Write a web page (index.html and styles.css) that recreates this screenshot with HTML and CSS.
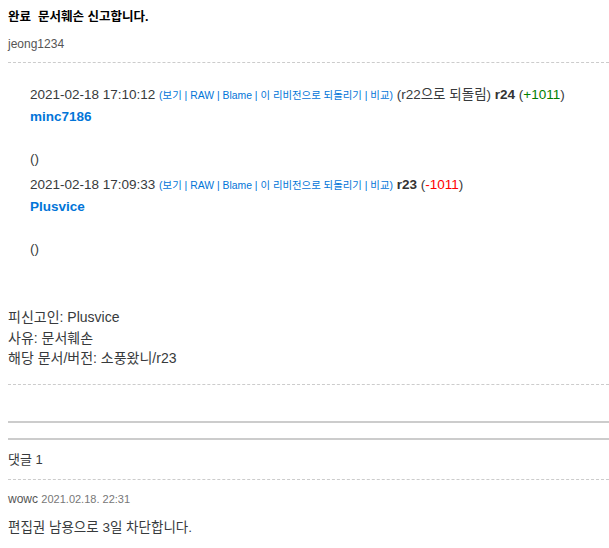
FILE: index.html
```html
<!DOCTYPE html>
<html lang="ko">
<head>
<meta charset="utf-8">
<link rel="stylesheet" href="styles.css">
</head>
<body>
<div class="page">
  <div class="title">완료 &nbsp;문서훼손 신고합니다.</div>
  <div class="author">jeong1234</div>
  <hr class="dash">
  <div class="content">
    <ul class="history">
      <li>
        <div class="rev-line">2021-02-18 17:10:12 <span class="tools">(<a>보기</a> | <a>RAW</a> | <a>Blame</a> | <a>이 리비전으로 되돌리기</a> | <a>비교</a>)</span> <span class="note">(r22으로 되돌림)</span> <b>r24</b> (<span class="plus">+1011</span>)</div>
        <div class="user">minc7186</div>
        <div class="blank"></div>
        <div class="msg">()</div>
      </li>
      <li>
        <div class="rev-line">2021-02-18 17:09:33 <span class="tools">(<a>보기</a> | <a>RAW</a> | <a>Blame</a> | <a>이 리비전으로 되돌리기</a> | <a>비교</a>)</span> <b>r23</b> (<span class="minus">-1011</span>)</div>
        <div class="user">Plusvice</div>
        <div class="blank"></div>
        <div class="msg">()</div>
      </li>
    </ul>
    <div class="report">
      <div>피신고인: Plusvice</div>
      <div>사유: 문서훼손</div>
      <div>해당 문서/버전: 소풍왔니/r23</div>
    </div>
  </div>
  <hr class="dash">
  <div class="spacer"></div>
  <hr class="thick">
  <hr class="thick">
  <div class="comments-head">댓글 1</div>
  <hr class="dash">
  <div class="comment-meta"><span class="c-user">wowc</span> <span class="c-date">2021.02.18. 22:31</span></div>
  <div class="comment-body">편집권 남용으로 3일 차단합니다.</div>
</div>
</body>
</html>
```

FILE: styles.css
```css
html, body {
  margin: 0;
  padding: 0;
  background: #fff;
}
body {
  padding: 0 0 0 8px;
  font-family: "Liberation Sans", "Noto Sans CJK KR", sans-serif;
  color: #373a3c;
  overflow: hidden;
}
.page {
  padding-top: 8px;
}
.title {
  font-size: 12.5px;
  font-weight: bold;
  color: #000;
  line-height: 18px;
}
.author {
  font-size: 12px;
  color: #555;
  line-height: 16px;
  margin-top: 10px;
}
.dash {
  border: 0;
  border-top: 1px dashed #ccc;
  margin: 0;
  height: 0;
}
.author + .dash {
  margin-top: 10px;
}
.content {
  font-size: 13.5px;
  line-height: 20.5px;
}
.history {
  list-style: none;
  margin: 21px 0 0 0;
  padding: 0 0 0 22px;
}
.history li {
  margin: 0;
}
.rev-line {
  line-height: 22px;
}
.tools {
  font-size: 10.4px;
  color: #0275d8;
}
.tools a {
  color: #0275d8;
}
.note {
  color: #373a3c;
}
.rev-line b {
  color: #333;
}
.plus { color: #008000; }
.minus { color: #ff0000; }
.user {
  font-weight: bold;
  color: #0275d8;
  line-height: 20px;
}
.blank {
  height: 21px;
}
.msg {
  line-height: 21px;
  margin-top: 0;
  margin-bottom: 5px;
}
.report {
  font-size: 14px;
  line-height: 20.5px;
  margin-top: 48px;
  margin-bottom: 15px;
}
.spacer {
  height: 36px;
}
.thick {
  border: 0;
  height: 2px;
  background: #ccc;
  margin: 0 0 15px 0;
}
.thick + .thick {
  margin-bottom: 0;
}
.comments-head {
  font-size: 13px;
  color: #373a3c;
  line-height: 18px;
  padding: 11px 0 10px 0;
}
.comment-meta {
  padding-top: 11px;
  line-height: 16px;
  font-size: 12px;
}
.c-user { color: #555; }
.c-date { font-size: 11px; color: #777; }
.comment-body {
  font-size: 13.5px;
  line-height: 20px;
  margin-top: 11px;
}
```
